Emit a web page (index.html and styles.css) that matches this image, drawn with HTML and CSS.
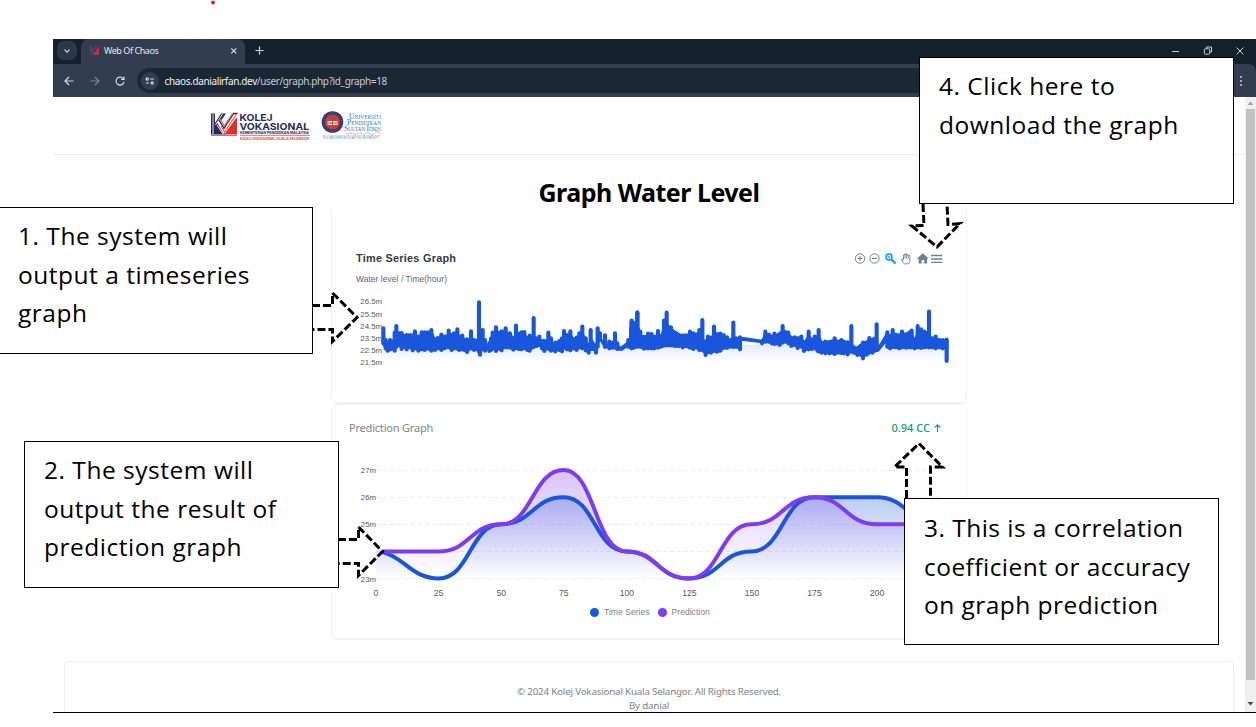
FILE: index.html
```html
<!DOCTYPE html>
<html lang="en">
<head>
<meta charset="utf-8">
<title>Web Of Chaos</title>
<link rel="stylesheet" href="styles.css">
</head>
<body>
<main class="browser">
  <header class="chrome">
    <div class="tabs">
      <span class="tab-search"><svg width="8" height="8" viewBox="0 0 8 8"><path d="M1.5 2.7 4 5.2 6.5 2.7" class="ico"/></svg></span>
      <div class="tab">
        <svg width="11" height="11" viewBox="0 0 11 11"><path d="M1 1h2v9H1zM3 5l3-4h2L4 7z" fill="#4a407c"/><path d="M3 4.500l2.500 3.500L10 1v9H3l2-1z" fill="#d02c31"/></svg>
        <span class="tab-name">Web Of Chaos</span>
        <svg width="8" height="8" viewBox="0 0 8 8"><path d="M1.3 1.3l5 5m0-5l-5 5" class="ico"/></svg>
      </div>
      <svg class="plus" width="9" height="9" viewBox="0 0 9 9"><path d="M4.5.5v8m-4-4h8" class="ico"/></svg>
      <svg class="controls" width="72" height="12" viewBox="0 0 72 12"><path d="M0 6.500h7M64.500 2.500l7 7m0-7l-7 7M34.500 3.500V2h5v5h-1.500" class="thin"/><rect x="32.300" y="3.800" width="5.400" height="5.400" rx="1" class="thin"/></svg>
    </div>
    <div class="toolbar">
      <svg width="10" height="10" viewBox="0 0 10 10"><path d="M9.5 5H1m4-4L1 5l4 4" class="ico"/></svg>
      <svg class="forward" width="10" height="10" viewBox="0 0 10 10"><path d="M.5 5H9M5 1l4 4-4 4" class="ico"/></svg>
      <svg width="10" height="10" viewBox="0 0 10 10"><path d="M8.5 3A4 4 0 1 0 9 5.800M9 .5v3H6" class="ico"/></svg>
      <div class="address">
        <span class="site"><svg width="10" height="8" viewBox="0 0 10 8"><path d="M5 2h4M1 6h3" class="ico"/><circle cx="2.200" cy="2" r="1.100" class="ico"/><circle cx="7.200" cy="6" r="1.100" class="ico"/></svg></span>
        <span class="url"><b>chaos.danialirfan.dev</b>/user/graph.php?id_graph=18</span>
      </div>
      <svg class="more" width="4" height="12" viewBox="0 0 4 12"><g fill="#c6ced9"><circle cx="2" cy="2" r="1"/><circle cx="2" cy="6" r="1"/><circle cx="2" cy="10" r="1"/></g></svg>
    </div>
  </header>
  <div class="viewport">
    <div class="page">
      <nav class="brand">
        <svg width="176" height="34" viewBox="208 108 176 34">
          <path d="M211 113.500h4v9.500l6-9.500h5l-7.500 11 7 10H211z" fill="#29295d"/>
          <path d="M213 114v20M215.500 125l7-11M217 125l6 9" stroke="#fff" stroke-width=".9"/>
          <path d="M237 117v17.500h-13z" fill="#e12f29"/>
          <path d="M219 121l5 8.500 10-15.500" fill="none" stroke="#fff" stroke-width="5"/>
          <path d="M219 120l5 8.500 9.500-15h4" fill="none" stroke="#29295d" stroke-width="1.400"/>
          <path d="M220 119l4.300 7 8.200-12.500M221 126l3.500 6 12-18" fill="none" stroke="#e8604d" stroke-width="1.200"/>
          <path d="M211 135.500h26M240 135.300h70" stroke="#a8576a" stroke-width=".8"/>
          <g class="kolej"><text x="239.500" y="120.600" textLength="33" lengthAdjust="spacingAndGlyphs">KOLEJ</text><text x="239.500" y="129.600" textLength="69.500" lengthAdjust="spacingAndGlyphs">VOKASIONAL</text></g>
          <text x="240" y="134" class="sub" textLength="69" lengthAdjust="spacingAndGlyphs">KEMENTERIAN PENDIDIKAN MALAYSIA</text>
          <text x="240" y="139.600" class="sub red" textLength="69" lengthAdjust="spacingAndGlyphs">KOLEJ VOKASIONAL KUALA SELANGOR</text>
          <circle cx="332.500" cy="122" r="10.800" fill="#28386c"/><circle cx="332.500" cy="122" r="9" fill="none" stroke="#8992aa" stroke-width=".6" stroke-dasharray="1 1"/><circle cx="332.500" cy="122" r="7.600" fill="#df3530"/>
          <path d="M327.500 121h10v4h-10z" fill="#eee5cf"/><path d="M332.500 115v10M329 118h7M327.500 123h10" stroke="#735957" stroke-width=".9"/>
          <g class="upsi"><text x="349" y="118.800" textLength="32" lengthAdjust="spacingAndGlyphs"><tspan class="cap">U</tspan>NIVERSITI</text><text x="347" y="125" textLength="34" lengthAdjust="spacingAndGlyphs"><tspan class="cap">P</tspan>ENDIDIKAN</text><text x="344" y="131.200" textLength="37" lengthAdjust="spacingAndGlyphs"><tspan class="cap">S</tspan>ULTAN <tspan class="cap">I</tspan>DRIS</text></g>
          <path d="M346 133.800q2 .8 4-.4t4 .4 4-.4 4 .4 4-.4 4 .4 4-.4 6 .2" fill="none" stroke="#ef8a86" stroke-width=".9" stroke-dasharray="3 .7"/>
          <path d="M322 135.700h59" stroke="#bbb" stroke-width=".6"/>
          <text x="323" y="139.300" class="upsi-sub" textLength="56" lengthAdjust="spacingAndGlyphs">SULTAN IDRIS EDUCATION UNIVERSITY</text>
        </svg>
      </nav>
      <h1 class="title">Graph Water Level</h1>
      <section class="card card-series">
        <svg width="634" height="196" viewBox="332 206 634 196">
          <defs><linearGradient id="fade" x2="0" y2="1"><stop stop-color="#1a56db" stop-opacity=".12"/><stop offset="1" stop-color="#1a56db" stop-opacity="0"/></linearGradient></defs>
          <text x="356" y="262" class="chart-title" textLength="100">Time Series Graph</text>
          <text x="356" y="281.700" class="chart-sub" textLength="91">Water level / Time(hour)</text>
          <path d="M383 345H948V362H383z" fill="url(#fade)"/>
          <g transform="translate(320 230) scale(.33333)" class="series">
            <path class="band" d="M188 340L195 325 203 345 210 335 220 335 224 315 245 315 258 322 276 318 282 308 292 328 304 312 336 308 344 328 364 320 385 315 400 325 412 310 425 328 440 328 465 335 476 325 492 335 503 350 515 320 528 305 545 310 560 306 570 312 582 326 590 308 612 310 620 322 632 320 650 333 670 330 690 332 705 345 730 320 752 315 762 328 780 318 790 315 805 345 815 330 828 350 835 310 855 350 885 330 900 355 928 334 950 320 965 335V350H935L928 345 905 360 890 358 870 350 855 353 845 335 835 315 830 360 808 360 790 355 740 355 700 362 680 358 660 346 630 358 580 357 550 353 508 360 490 352 480 372 470 354 445 360 420 354 385 352 365 356 330 355 300 356 280 353 245 350 232 348 222 358 205 358 192 347z"/>
            <path d="M190 295V340M197 330V355M203 345V362M210 330V358M217 335V355M224 308V362M229 288V350M238 310V345M245 309V357M252 318V350M260 315V358M270 315V352M278 320V361M285 304V355M295 320V362M305 307V358M314 307V360M324 307V356M334 300V362M345 328V360M353 324V355M364 314V360M374 320V355M386 302V352M395 315V360M402 310V355M412 298V356M418 320V360M427 317V358M434 332V360M441 328V366M453 304V352M462 330V360M471 332V358M477 217V365M480 330V374M488 300V345M495 330V362M508 340V363M513 326V360M518 308V355M528 292V363M537 308V356M545 304V361M557 295V352M565 314V350M570 310V348M580 325V359M588 287V352M596 315V357M604 307V358M613 306V353M622 325V360M629 317V362M641 264V345M650 325V348M658 320V345M666 335V355M673 342V363M685 308V355M693 325V362M706 338V364M718 333V360M726 325V364M732 303V350M741 315V358M751 304V361M761 328V355M770 323V360M778 310V350M787 290V355M797 325V361M806 350V368M812 300V345M828 350V368M833 295V350M840 310V330M855 316V350M868 335V355M878 340V353M885 310V350M892 340V357M925 330V350M935 272V355M943 280V350M952 248V350"/>
          </g>
          <g transform="translate(630 280) scale(.33333)" class="series">
            <path class="band" d="M0 145L20 130 35 168 45 168 70 168 95 165 105 125 125 148 150 164 180 163 205 160 222 185 234 175 252 165 275 165 300 183 325 185 332 173 335 173 396 182 406 162 430 170 460 152 490 175 514 172 522 188 536 168 550 180 566 165 575 188 614 180 640 185 660 190 680 205 699 188 720 180 740 170 745 204 772 158 780 172 790 160 802 172 816 163 845 158 854 182 863 158 880 158 895 155 905 178 917 174 930 182 952 180 952 203H775L768 183 745 212 720 220 698 230 670 218 563 217 553 202 528 210 510 198 490 196 470 184 450 191 420 187 396 187 334 179 328 203 300 200 270 210 228 220 205 206 160 200 110 198 80 204 42 206 20 198 0 203z"/>
            <path d="M5 125V195M12 130V203M22 98V190M31 155V200M42 175V206M54 161V205M65 162V205M73 180V205M84 153V203M93 175V200M102 122V195M110 98V195M123 142V192M135 160V198M145 165V198M158 168V202M170 170V198M180 155V203M190 160V207M200 165V200M208 150V210M217 120V205M227 185V225M234 170V215M243 175V218M252 140V212M261 162V215M271 161V212M281 165V202M291 172V204M301 180V200M310 128V201M319 175V200M330 172V208M396 185V190M406 155V185M417 164V185M425 170V190M433 161V192M441 168V190M449 166V195M458 138V188M467 156V185M475 158V190M484 175V198M494 172V195M503 175V204M514 170V200M522 190V213M536 155V208M545 185V207M554 170V205M566 150V195M574 188V218M586 185V220M598 190V220M606 190V218M614 175V222M624 186V218M634 180V219M642 185V220M653 187V223M664 138V208M672 205V218M682 205V225M692 198V215M699 188V235M710 195V224M718 174V215M727 185V218M740 133V210M772 157V200M780 168V205M788 150V200M798 164V202M808 166V205M816 155V202M828 163V203M838 158V202M845 152V202M854 180V205M863 138V202M873 148V204M883 155V202M897 95V202M907 175V202M917 170V205M928 180V202M938 180V205M950 179V243"/>
          </g>
          <g class="axis" text-anchor="end"><text x="382" y="304">26.5m</text><text x="382" y="316.500">25.5m</text><text x="382" y="328.500">24.5m</text><text x="382" y="340.500">23.5m</text><text x="382" y="352.500">22.5m</text><text x="382" y="364.800">21.5m</text></g>
          <g fill="none" stroke="#6e8192" stroke-width="1"><circle cx="860" cy="258.500" r="4.700"/><path d="M857.500 258.500h5m-2.500-2.500v5"/><circle cx="874.500" cy="258.500" r="4.700"/><path d="M872 258.500h5"/></g>
          <g fill="none" stroke="#008ffb"><circle cx="889" cy="257" r="3" stroke-width="1.400"/><path d="M891.500 259.500l4 4" stroke-width="1.800"/><path d="M887.500 257h3m-1.500-1.500v3" stroke-width=".8"/></g>
          <path d="M901.500 259.500q1-.8 2 .5v-5q.8-1 1.500 0v-1q.8-1 1.600 0v.6q.8-.8 1.500 0v1q1.200-.8 1.800.2v5.700q-.4 2.300-2.500 2.300h-3q-1.200-.4-2.900-4.300z" fill="#fff" stroke="#6e8192" stroke-width=".9"/><path d="M905 254v4.500m1.600-4.500v4.500m1.600-3.500v3.500" stroke="#6e8192" stroke-width=".9"/>
          <path d="M916.800 258.700l6-5.500 6 5.500h-1.700v4.800h-2.900v-3.500h-2.600v3.500h-2.900v-4.800z" fill="#6e8192"/><path d="M931 255.500h11.300M931 259h11.300M931 262.400h11.300" stroke="#6e8192" stroke-width="1.300"/>
        </svg>
      </section>
      <section class="card card-prediction">
        <div class="card-head"><span class="card-name">Prediction Graph</span><span class="score">0.94 CC <svg width="7" height="8" viewBox="0 0 7 8"><path d="M3.500 8V1M.7 3.700L3.500.9l2.800 2.800" fill="none" stroke="#0e9f6e" stroke-width="1.200"/></svg></span></div>
        <svg width="634" height="160" viewBox="332 442 634 160">
          <defs>
            <linearGradient id="blue" gradientUnits="userSpaceOnUse" x1="0" y1="497" x2="0" y2="578"><stop stop-color="#1a56db" stop-opacity=".3"/><stop offset="1" stop-color="#1a56db" stop-opacity="0"/></linearGradient>
            <linearGradient id="purple" gradientUnits="userSpaceOnUse" x1="0" y1="470" x2="0" y2="578"><stop stop-color="#7e3bf2" stop-opacity=".3"/><stop offset="1" stop-color="#7e3bf2" stop-opacity="0"/></linearGradient>
          </defs>
          <path d="M376 470.300H939M376 497.400H939M376 524.500H939M376 551.500H939M376 578.600H939" stroke="#ececee" stroke-width="1" stroke-dasharray="4 3"/>
          <path fill="url(#blue)" d="M376 550C407.300 550 407.300 578.500 438.600 578.500S470 524.300 501.200 524.300 532.500 497.200 563.700 497.200 595 551.400 626.300 551.400 657.500 578.500 688.800 578.500 720 551.400 751.400 551.400 782.700 497.200 814 497.200H876.600C907.900 497.200 907.900 524.300 939 524.300V578.500H376z"/>
          <path fill="url(#purple)" d="M376 551.400H438.600C470 551.400 470 524.300 501.200 524.300S532.500 470.100 563.700 470.100 595 551.400 626.300 551.400 657.500 578.500 688.800 578.500 720 524.300 751.400 524.300 782.700 497.200 814 497.200 845.300 524.300 876.600 524.300H939V578.500H376z"/>
          <g fill="none" stroke-width="4"><path stroke="#1a56db" d="M383 552.400C404 557 412 578.500 438.600 578.500 470 578.500 470 524.300 501.200 524.300S532.500 497.200 563.700 497.200 595 551.400 626.300 551.400 657.500 578.500 688.800 578.500 720 551.400 751.400 551.400 782.700 497.200 814 497.200H876.600C907.900 497.200 907.900 524.300 939 524.300"/><path stroke="#7e3bf2" d="M382 551.400H438.600C470 551.400 470 524.300 501.200 524.300S532.500 470.100 563.700 470.100 595 551.400 626.300 551.400 657.500 578.500 688.800 578.500 720 524.300 751.400 524.300 782.700 497.200 814 497.200 845.300 524.300 876.600 524.300H939"/></g>
          <g class="axis" text-anchor="end"><text x="376" y="473">27m</text><text x="376" y="500">26m</text><text x="376" y="527">25m</text><text x="376" y="581.500">23m</text></g>
          <g class="axis axis-x" text-anchor="middle"><text x="376" y="595.700">0</text><text x="438.600" y="595.700">25</text><text x="501.200" y="595.700">50</text><text x="563.800" y="595.700">75</text><text x="626.800" y="595.700">100</text><text x="689.300" y="595.700">125</text><text x="752" y="595.700">150</text><text x="814.500" y="595.700">175</text><text x="877" y="595.700">200</text></g>
        </svg>
        <div class="legend"><i class="dot dot-blue"></i><span>Time Series</span><i class="dot dot-purple"></i><span>Prediction</span></div>
      </section>
      <footer class="footer"><span>© 2024 Kolej Vokasional Kuala Selangor. All Rights Reserved.</span><span>By danial</span></footer>
    </div>
    <div class="scroll"><svg width="11" height="12" viewBox="0 0 11 12"><path d="M2.500 8l3-3.500 3 3.500z" fill="#a3a3a3"/></svg><div class="thumb"></div><svg width="11" height="12" viewBox="0 0 11 12"><path d="M2.500 4l3 3.500 3-3.500z" fill="#4a4a4a"/></svg></div>
  </div>
</main>
<svg class="arrows" width="1256" height="727" viewBox="0 0 1256 727">
  <circle cx="213" cy="2.500" r="1.900" fill="#e81c23"/>
  <g fill="none" stroke="#000" stroke-width="3" stroke-dasharray="8 3">
    <path d="M312 305.500H332.500V293L357 317.500 332.500 341.500V329.500H312"/>
    <path d="M338 539.500H358.500V527L382.500 551.500 358.500 575.500V563.500H338"/>
    <path d="M906.500 498V467H894.500L919 443.500 942.500 467H930.500V498"/>
    <path d="M923 204L924 225.500 912 226 937 247 960 223.500 948 224.500 947 204"/>
  </g>
</svg>
<aside class="note note-1">1. The system will<br>output a timeseries<br>graph</aside>
<aside class="note note-2">2. The system will<br>output the result of<br>prediction graph</aside>
<aside class="note note-3">3. This is a correlation<br>coefficient or accuracy<br>on graph prediction</aside>
<aside class="note note-4">4. Click here to<br>download the graph</aside>
</body>
</html>
```

FILE: styles.css
```css
* { box-sizing: border-box; }
body { margin: 0; width: 1256px; height: 727px; overflow: hidden; position: relative; background: #fff; font-family: "Noto Sans", sans-serif; }
svg { display: block; flex-shrink: 0; }
.browser { margin: 39px 0 0 53px; width: 1203px; height: 674px; overflow: hidden; display: flex; flex-direction: column; border-bottom: 1.5px solid #000; }
.chrome { height: 58px; background: #14212d; flex-shrink: 0; }
.tabs { height: 25px; display: flex; align-items: center; padding: 0 12px 0 4px; }
.tab-search { width: 20px; height: 19px; border-radius: 7px; background: #2c3848; display: grid; place-items: center; margin-top: -2px; }
.tab { width: 164px; height: 25px; margin-left: 4px; padding: 0 7px 2px 8px; background: #323d4f; border-radius: 8px 8px 0 0; display: flex; align-items: center; color: #e5e9f0; font-size: 9px; }
.tab-name { flex: 1; margin-left: 4px; letter-spacing: -.45px; }
.plus { margin: -2px 0 0 10px; }
.controls { margin: -2px 0 0 auto; }
.ico { fill: none; stroke: #d3dae4; stroke-width: 1.2; }
.thin { fill: none; stroke: #c9d1db; stroke-width: 1; }
.toolbar { height: 33px; padding: 0 13px 0 11px; display: flex; align-items: center; gap: 15.5px; background: #323d4f; border-radius: 0 7px 0 0; }
.forward { opacity: .45; }
.address { flex: 1; height: 25px; border-radius: 13px; background: #1b2734; display: flex; align-items: center; padding-left: 4px; margin-left: -4px; }
.site { width: 18px; height: 18px; border-radius: 50%; background: #323d4f; display: grid; place-items: center; }
.url { margin-left: 6px; color: #c4cbd5; font-size: 10px; letter-spacing: -.37px; }
.url b { font-weight: 400; color: #eef1f5; }
.more { margin-left: 4px; }
.viewport { flex: 1; min-height: 0; display: flex; }
.page { flex: 1; display: flex; flex-direction: column; align-items: center; }
.brand { align-self: stretch; height: 58px; padding: 11px 0 0 155px; border-bottom: 1px solid #ededf0; flex-shrink: 0; }
.kolej { font: 700 9.400px Inter, sans-serif; fill: #29295d; }
.sub { font: 700 3.500px Inter, sans-serif; fill: #29295d; }
.red { fill: #df4d3e; }
.upsi { font: 5.400px "Liberation Serif", serif; fill: #2f7ad0; }
.cap { font-size: 7.600px; }
.upsi-sub { font: 3px "Liberation Sans", sans-serif; fill: #4b94d7; }
.title { margin: 20px 0 0; height: 30px; line-height: 35px; font-size: 25px; letter-spacing: -.5px; font-weight: 700; color: #000; white-space: nowrap; }
.card { width: 636px; border: 1px solid #f4f4f5; border-radius: 6px; box-shadow: 0 1px 1px #f0f0f0; flex-shrink: 0; overflow: hidden; }
.card-series { height: 198px; border-top-color: transparent; }
.card-prediction { height: 235px; margin-top: 1px; }
.chart-title { font: 700 10.900px "Liberation Sans", sans-serif; fill: #333b43; }
.chart-sub { font: 8.400px "Liberation Sans", sans-serif; fill: #606469; }
.series { fill: none; stroke: #1a56db; stroke-width: 12.500; stroke-linecap: round; stroke-linejoin: round; }
.band { fill: #1a56db; stroke-width: 6; }
.axis { font: 7.800px "Liberation Sans", sans-serif; fill: #555a60; }
.axis-x { font-size: 8.600px; }
.card-head { height: 37px; padding: 8px 25px 0 17px; display: flex; justify-content: space-between; align-items: center; color: #7d838c; font-size: 11px; }
.card-name { letter-spacing: -.2px; }
.score { color: #0e9f6e; display: flex; align-items: center; gap: 4px; font-size: 11px; font-weight: 500; }
.legend { height: 20px; display: flex; align-items: center; padding-left: 258px; color: #7d828a; font: 8.600px "Liberation Sans", sans-serif; }
.dot { width: 9px; height: 9px; border-radius: 50%; margin-right: 5px; }
.dot-blue { background: #1a56db; }
.dot-purple { background: #7e3bf2; margin-left: 8px; }
.footer { width: 1170px; height: 70px; margin-top: 22px; border: 1px solid #f0f0f2; border-radius: 4px; padding-top: 23px; display: flex; flex-direction: column; align-items: center; color: #7d828b; font-size: 9.800px; letter-spacing: -.2px; line-height: 14.200px; flex-shrink: 0; }
.scroll { width: 11px; background: #f0f0f0; display: flex; flex-direction: column; align-items: center; }
.thumb { width: 9px; height: 571px; background: #c1c1c1; margin-bottom: 18px; flex-shrink: 0; }
.arrows { position: absolute; left: 0; top: 0; }
.note { position: absolute; width: 315px; height: 147px; border: 1px solid #000; background: #fff; padding: 9px 19px; color: #000; font: 24.500px/38.500px "Open Sans", sans-serif; letter-spacing: .52px; white-space: nowrap; }
.note-1 { left: -2px; top: 207px; }
.note-2 { left: 24px; top: 441px; }
.note-3 { left: 904px; top: 498px; padding-top: 10px; letter-spacing: .46px; }
.note-4 { left: 919px; top: 57px; }
```
